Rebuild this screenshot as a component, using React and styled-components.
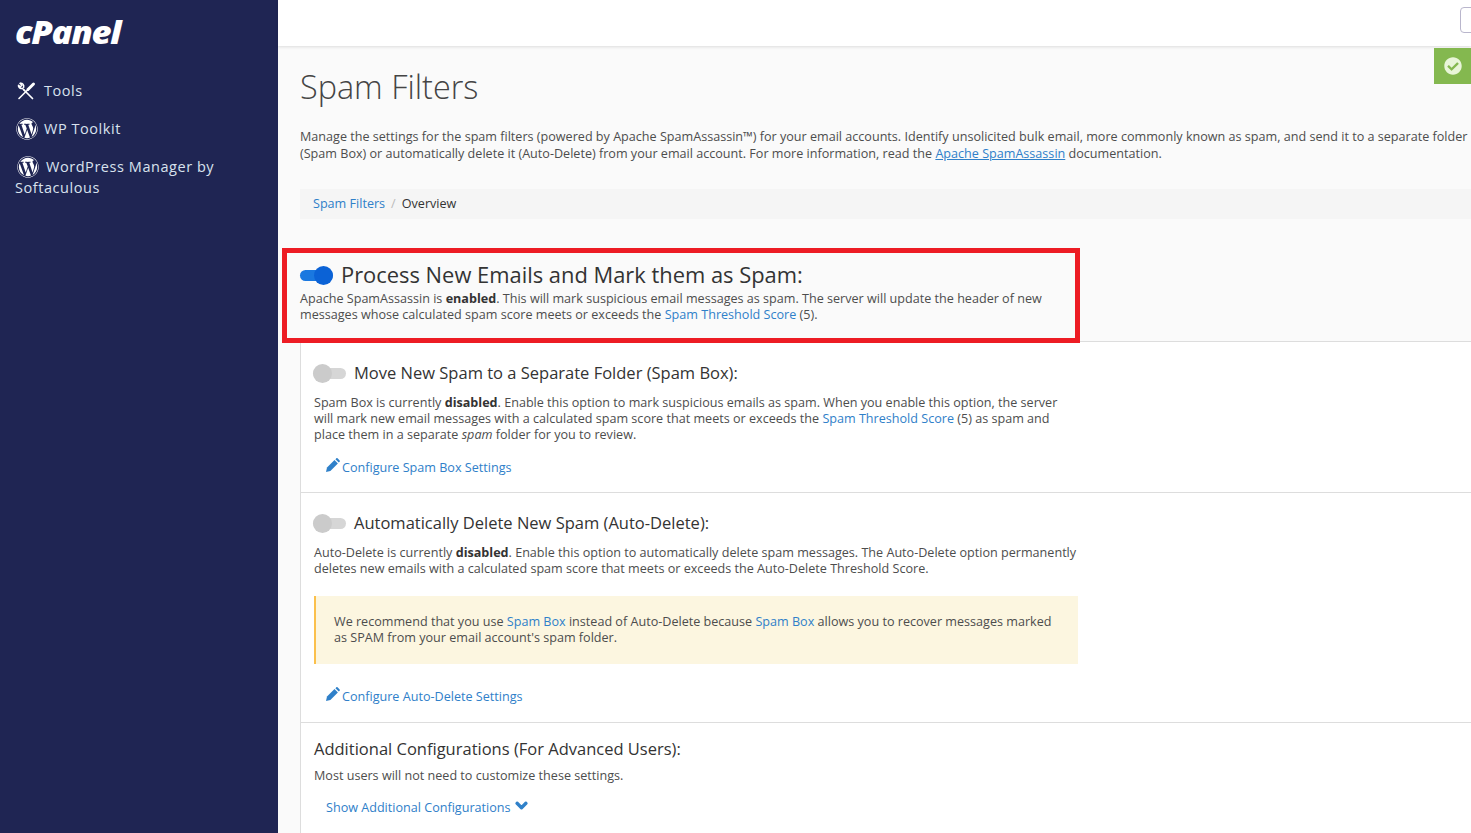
import React from "react";
import styled, { createGlobalStyle } from "styled-components";
import { FaWordpress, FaChevronDown, FaCheckCircle } from "react-icons/fa";

const GlobalStyle = createGlobalStyle`
  html, body { margin: 0; padding: 0; }
  body {
    font-family: "Open Sans", "Liberation Sans", sans-serif;
    font-size: 12.6px;
    color: #4d4d4d;
    overflow: hidden;
  }
  * { box-sizing: border-box; }
`;

const Page = styled.div`
  display: flex;
  width: 1471px;
  height: 833px;
  overflow: hidden;
  position: relative;
  background: #fafafa;
`;

const Sidebar = styled.aside`
  flex: 0 0 278px;
  background: #1f2553;
  padding: 17px 15px 0;
  color: #d9e2ee;
`;

const Logo = styled.div`
  height: 30px;
  color: #fff;
  font-size: 31px;
  line-height: 30px;
  font-weight: 800;
  font-style: italic;
  letter-spacing: -1.2px;
  transform: scaleX(1.12);
  transform-origin: left center;
`;

const Nav = styled.nav`
  margin-top: 33px;
`;

const NavItem = styled.a`
  display: block;
  margin-bottom: ${(p) => p.$gap || 0}px;
  font-size: 14.5px;
  line-height: 21px;
  letter-spacing: 0.55px;
  color: #d9e2ee;
  svg {
    vertical-align: middle;
    margin: -3px ${(p) => p.$after || 7}px -3px ${(p) => p.$indent || 0}px;
    position: relative;
    top: -1px;
  }
`;

const Main = styled.main`
  flex: 1;
  min-width: 0;
  position: relative;
`;

const TopBar = styled.header`
  height: 46px;
  background: #fff;
  box-shadow: 0 1px 3px rgba(0, 0, 0, 0.12);
  position: relative;
`;

const TopButton = styled.div`
  position: absolute;
  left: 1182px;
  top: 7px;
  width: 30px;
  height: 26px;
  border: 1px solid #b9b6cc;
  border-radius: 4px;
  background: #fff;
`;

const Notice = styled.div`
  position: absolute;
  right: 0;
  top: 48px;
  width: 37px;
  height: 36px;
  background: #84b84f;
  display: flex;
  align-items: center;
  justify-content: center;
  color: #e8f5d8;
  font-size: 18px;
`;

const Content = styled.div`
  width: 1200px;
  padding: 20px 0 0 22px;
`;

const Title = styled.h1`
  margin: 0;
  font-size: 32.4px;
  line-height: 40px;
  font-weight: 300;
  color: #444;
`;

const Intro = styled.p`
  margin: 22px 0 0;
  line-height: 17px;
`;

const Link = styled.a`
  color: #2f80c9;
  text-decoration: ${(p) => (p.$underline ? "underline" : "none")};
`;

const Breadcrumb = styled.div`
  margin-top: 27px;
  height: 30px;
  padding: 0 13px 2px;
  background: #f5f5f5;
  display: flex;
  align-items: center;
  color: #333;
`;

const Crumb = styled.span`
  color: #bbb;
  margin: 0 6px;
`;

const MainOption = styled.section`
  margin-top: 29px;
  height: 93px;
  padding-top: 15px;
`;

const OptionHead = styled.div`
  display: flex;
  align-items: center;
  height: 24px;
`;

const MainHeading = styled.h2`
  margin: 0 0 0 8px;
  font-size: 21.9px;
  line-height: 24px;
  font-weight: 400;
  color: #333;
`;

const MainText = styled.p`
  margin: 4px 0 0;
  width: 770px;
  line-height: 16px;
  b {
    color: #333;
  }
`;

const Track = styled.span`
  flex: none;
  position: relative;
  display: block;
  width: 33px;
  height: 11px;
  margin-left: ${(p) => (p.$on ? 0 : -1)}px;
  border-radius: 6px;
  background: ${(p) => (p.$on ? "#1a78e0" : "#d6d6d6")};
  &::after {
    content: "";
    position: absolute;
    top: -4px;
    ${(p) => (p.$on ? "right: 0;" : "left: 0;")}
    width: 19px;
    height: 19px;
    border-radius: 50%;
    background: ${(p) => (p.$on ? "#0b62d6" : "#cbcbcb")};
  }
`;

const Panel = styled.div`
  border-left: 1px solid #ddd;
  background: #fff;
`;

const Section = styled.section`
  border-top: 1px solid #ddd;
  padding: ${(p) => p.$top || 19}px 0 0 13px;
  height: ${(p) => p.$height}px;
`;

const SectionHeading = styled.h3`
  margin: 0 0 0 8px;
  font-size: 16.5px;
  line-height: 24px;
  font-weight: 400;
  color: #333;
`;

const PlainHeading = styled(SectionHeading)`
  margin: 0;
`;

const SectionText = styled.p`
  margin: ${(p) => p.$top || 10}px 0 0;
  width: 764px;
  line-height: 16px;
  b {
    color: #333;
  }
`;

const Action = styled.div`
  margin: ${(p) => p.$top || 15}px 0 0 12px;
  line-height: 18px;
  svg {
    color: #2f80c9;
    margin-right: 2px;
    vertical-align: 0;
  }
`;

const Chevron = styled(FaChevronDown)`
  && {
    margin: 0 0 0 4px;
    font-size: 13px;
    vertical-align: 0;
    stroke: currentColor;
    stroke-width: 50px;
  }
`;

const Alert = styled.div`
  margin-top: 19px;
  width: 764px;
  height: 68px;
  padding: 18px 19px 0 18px;
  background: #fcf6e0;
  border-left: 2px solid #fbc04c;
  line-height: 16px;
`;

const RedBox = styled.div`
  position: absolute;
  left: 282px;
  top: 248px;
  width: 798px;
  height: 95px;
  border: 5px solid #ed1c24;
  pointer-events: none;
`;

const ToolsIcon = () => (
  <svg width="22" height="22" viewBox="0 0 22 22" fill="none" stroke="#fff" strokeLinecap="round" strokeLinejoin="round">
    <path d="M4 18.5 12.5 10" strokeWidth="1.6" />
    <path d="M13 9.5 18.5 4" strokeWidth="3" />
    <path d="M17.5 18.5 9 10" strokeWidth="1.7" />
    <path d="M5.2 3.4 7 5.2 5.4 6.8 3.5 5.2C3.2 7.2 4.8 9.1 7.3 8.3L9 10" strokeWidth="1.5" />
    <path d="M5.2 3.4C7.3 3 9.4 4.9 8.6 7.4" strokeWidth="1.5" />
  </svg>
);

const PencilIcon = () => (
  <svg width="14" height="14" viewBox="0 0 14 14" fill="currentColor">
    <path d="M0 14 1 9.6 8.5 2.1 11.9 5.5 4.4 13Z" />
    <path d="M9.4 1.2 10.2.4C10.6 0 11.1 0 11.5.3L13.7 2.5C14 2.9 14 3.4 13.6 3.8L12.8 4.6Z" />
  </svg>
);

export default function App() {
  return (
    <Page>
      <GlobalStyle />
      <Sidebar>
        <Logo>cPanel</Logo>
        <Nav>
          <NavItem $gap={17} $after={7}>
            <ToolsIcon />
            Tools
          </NavItem>
          <NavItem $gap={17} $indent={1} $after={6}>
            <FaWordpress size={22} color="#fff" />
            WP Toolkit
          </NavItem>
          <NavItem $indent={2} $after={7}>
            <FaWordpress size={22} color="#fff" />
            WordPress Manager by Softaculous
          </NavItem>
        </Nav>
      </Sidebar>

      <Main>
        <TopBar>
          <TopButton />
        </TopBar>
        <Notice>
          <FaCheckCircle />
        </Notice>
        <Content>
          <Title>Spam Filters</Title>
          <Intro>
            Manage the settings for the spam filters (powered by Apache SpamAssassin™) for your email accounts. Identify unsolicited bulk email, more commonly known as spam, and send it to a separate folder
            (Spam Box) or automatically delete it (Auto-Delete) from your email account. For more information, read the{" "}
            <Link $underline>Apache SpamAssassin</Link> documentation.
          </Intro>
          <Breadcrumb>
            <Link>Spam Filters</Link>
            <Crumb>/</Crumb>
            Overview
          </Breadcrumb>

          <MainOption>
            <OptionHead>
              <Track $on />
              <MainHeading>Process New Emails and Mark them as Spam:</MainHeading>
            </OptionHead>
            <MainText>
              Apache SpamAssassin is <b>enabled</b>. This will mark suspicious email messages as spam. The server will update the header of new messages whose calculated spam score meets or exceeds the{" "}
              <Link>Spam Threshold Score</Link> (5).
            </MainText>
          </MainOption>

          <Panel>
            <Section $height={151}>
              <OptionHead>
                <Track />
                <SectionHeading>Move New Spam to a Separate Folder (Spam Box):</SectionHeading>
              </OptionHead>
              <SectionText>
                Spam Box is currently <b>disabled</b>. Enable this option to mark suspicious emails as spam. When you enable this option, the server will mark new email messages with a calculated spam score that meets or exceeds the{" "}
                <Link>Spam Threshold Score</Link> (5) as spam and place them in a separate <i>spam</i> folder for you to review.
              </SectionText>
              <Action>
                <PencilIcon />
                <Link>Configure Spam Box Settings</Link>
              </Action>
            </Section>

            <Section $height={230} $top={18}>
              <OptionHead>
                <Track />
                <SectionHeading>Automatically Delete New Spam (Auto-Delete):</SectionHeading>
              </OptionHead>
              <SectionText>
                Auto-Delete is currently <b>disabled</b>. Enable this option to automatically delete spam messages. The Auto-Delete option permanently deletes new emails with a calculated spam score that meets or exceeds the Auto-Delete Threshold Score.
              </SectionText>
              <Alert>
                We recommend that you use <Link>Spam Box</Link> instead of Auto-Delete because <Link>Spam Box</Link> allows you to recover messages marked as SPAM from your email account's spam folder.
              </Alert>
              <Action $top={23}>
                <PencilIcon />
                <Link>Configure Auto-Delete Settings</Link>
              </Action>
            </Section>

            <Section $height={120} $top={14}>
              <PlainHeading>Additional Configurations (For Advanced Users):</PlainHeading>
              <SectionText $top={7}>Most users will not need to customize these settings.</SectionText>
              <Action $top={15}>
                <Link>Show Additional Configurations</Link>
                <Chevron />
              </Action>
            </Section>
          </Panel>
        </Content>
      </Main>
      <RedBox />
    </Page>
  );
}
